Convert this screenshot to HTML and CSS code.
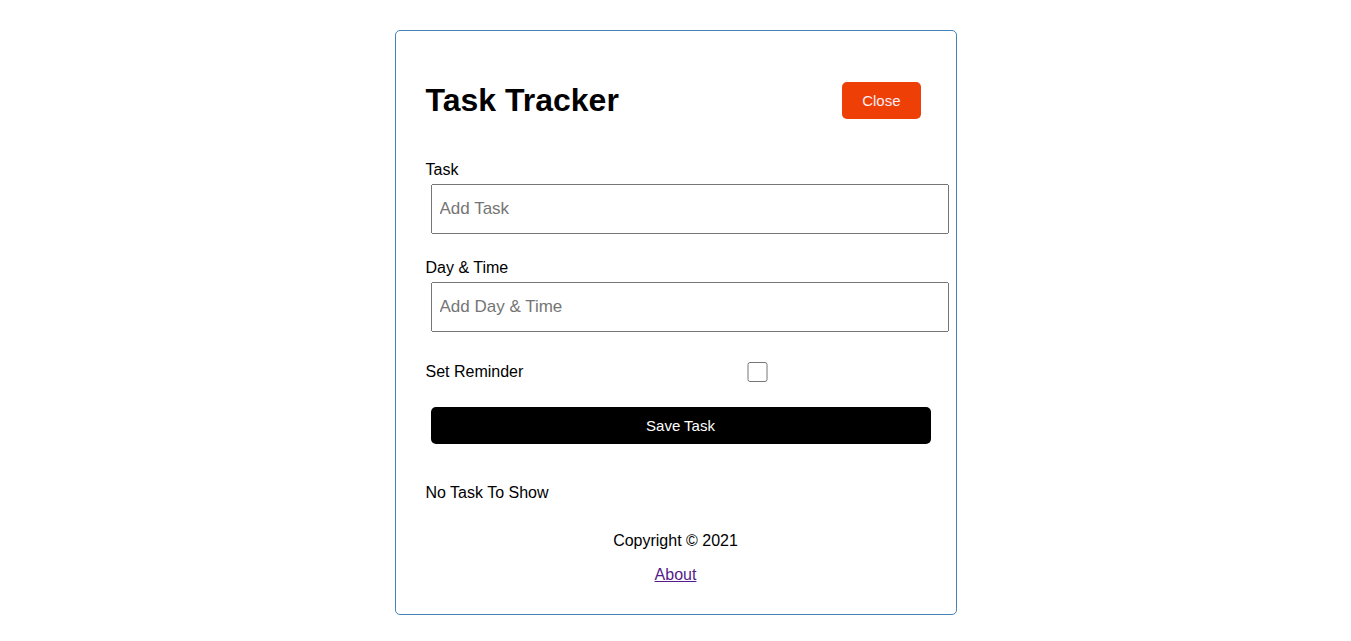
FILE: index.html
```html
<!DOCTYPE html>
<html lang="en">
<head>
<meta charset="utf-8">
<title>Task Tracker</title>
<link rel="stylesheet" href="styles.css">
</head>
<body>
<div class="container">
  <header class="header">
    <h1>Task Tracker</h1>
    <button class="btn btn-close" type="button">Close</button>
  </header>
  <form class="add-form">
    <div class="form-control">
      <label for="task">Task</label>
      <input id="task" type="text" placeholder="Add Task">
    </div>
    <div class="form-control">
      <label for="day">Day &amp; Time</label>
      <input id="day" type="text" placeholder="Add Day &amp; Time">
    </div>
    <div class="form-control form-control-check">
      <label for="reminder">Set Reminder</label>
      <input id="reminder" type="checkbox">
    </div>
    <button class="btn btn-block" type="submit">Save Task</button>
  </form>
  <p class="empty">No Task To Show</p>
  <footer class="footer">
    <p>Copyright &copy; 2021</p>
    <a href="#about">About</a>
  </footer>
</div>
</body>
</html>
```
FILE: styles.css
```css
* {
  box-sizing: border-box;
  margin: 0;
  padding: 0;
}

body {
  font-family: "Liberation Sans", Arial, sans-serif;
  font-size: 16px;
}

.container {
  max-width: 562px;
  margin: 30px auto;
  padding: 30px;
  border: 1px solid steelblue;
  border-radius: 5px;
}

.header {
  display: flex;
  justify-content: space-between;
  align-items: center;
  margin: 16px 0 37px;
}

.header h1 {
  font-size: 32px;
  line-height: 37px;
}

.btn {
  margin: 5px;
  padding: 10px 20px;
  border: none;
  border-radius: 5px;
  background: #000;
  color: #fff;
  font-family: inherit;
  font-size: 15px;
  line-height: 17px;
}

.btn-close {
  background: #ed3f06;
  color: #fdeef5;
}

.btn-block {
  display: block;
  width: 100%;
}

.add-form {
  margin-bottom: 40px;
}

.form-control {
  margin: 20px 0;
}

.form-control label {
  display: block;
  line-height: 18px;
}

.form-control input[type="text"] {
  width: calc(100% + 18px);
  height: 50px;
  margin: 5px;
  padding: 3px 7px;
  font-family: inherit;
  font-size: 17px;
}

.form-control-check {
  display: flex;
  align-items: center;
  justify-content: space-between;
}

.form-control-check label {
  flex: 1;
}

.form-control-check input {
  flex: 2;
  height: 20px;
  margin: 5px;
}

.empty {
  line-height: 18px;
}

.footer {
  margin-top: 30px;
  text-align: center;
  line-height: 18px;
}

.footer p {
  margin: 16px 0;
}

.footer a {
  color: #551a8b;
}
```
